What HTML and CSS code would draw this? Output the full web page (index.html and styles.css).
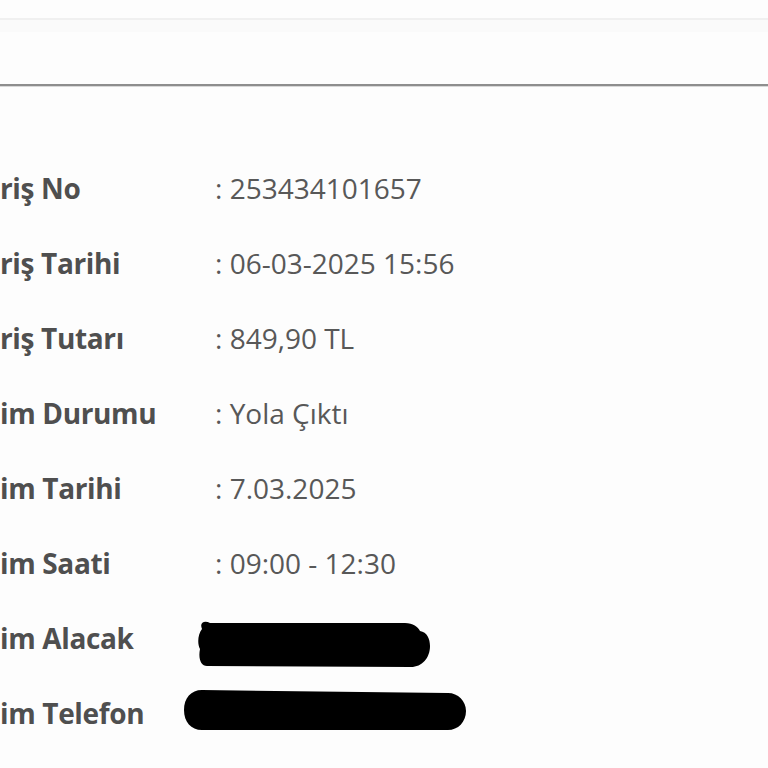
FILE: index.html
```html
<!DOCTYPE html>
<html lang="tr">
<head>
<meta charset="utf-8">
<title>Sipariş Detayı</title>
<link rel="stylesheet" href="styles.css">
</head>
<body>
<div class="topbar"></div>
<div class="header"><div class="header-band"></div></div>
<div class="details">
  <div class="label">riş No</div><div class="value">: 253434101657</div>
  <div class="label">riş Tarihi</div><div class="value">: 06-03-2025 15:56</div>
  <div class="label">riş Tutarı</div><div class="value">: 849,90 TL</div>
  <div class="label">im Durumu</div><div class="value">: Yola Çıktı</div>
  <div class="label">im Tarihi</div><div class="value">: 7.03.2025</div>
  <div class="label">im Saati</div><div class="value">: 09:00 - 12:30</div>
  <div class="label">im Alacak</div>
  <div class="value redacted">
    <svg class="scribble" width="230" height="75" viewBox="0 0 230 75">
      <path d="M-13 28 C-16 21 -10 19 -5 22 L190 22 C198 22 203 26 205 30 C212 31 215 38 215 45 C215 57 207 66 196 66 L-8 65 C-14 65 -17 58 -15 48 C-18 42 -17 33 -13 28 Z" fill="#000"/>
    </svg>
  </div>
  <div class="label">im Telefon</div>
  <div class="value redacted">
    <svg class="scribble" width="260" height="75" viewBox="0 0 260 75">
      <path d="M-31 34 C-31 22 -24 14 -13 14 L233 17 C243 17 251 25 251 35 C251 46 243 54 233 54 L-13 54 C-24 54 -31 46 -31 34 Z" fill="#000"/>
    </svg>
  </div>
</div>
</body>
</html>
```

FILE: styles.css
```css
html, body {
  margin: 0;
  padding: 0;
  background: #fdfdfd;
  overflow: hidden;
}

body {
  font-family: "Open Sans", "DejaVu Sans", sans-serif;
  width: 768px;
  height: 768px;
}

.topbar {
  height: 18px;
  border-bottom: 2px solid #f0f0f0;
  background: #fdfdfd;
}

.header {
  height: 64px;
  border-bottom: 2px solid #8e8e8e;
  box-shadow: 0 1px 0 #d8d8d8;
  background: #fdfdfd;
}

.header-band {
  height: 12px;
  background: #fafafa;
}

.details {
  padding-top: 65px;
  display: grid;
  grid-template-columns: 215px 1fr;
  grid-auto-rows: 75px;
  font-size: 28px;
  line-height: 75px;
}

.label {
  font-weight: 700;
  color: #4f4f4f;
  letter-spacing: -0.35px;
  white-space: nowrap;
}

.value {
  color: #585858;
  white-space: nowrap;
}

.scribble {
  display: block;
  overflow: visible;
}
```
